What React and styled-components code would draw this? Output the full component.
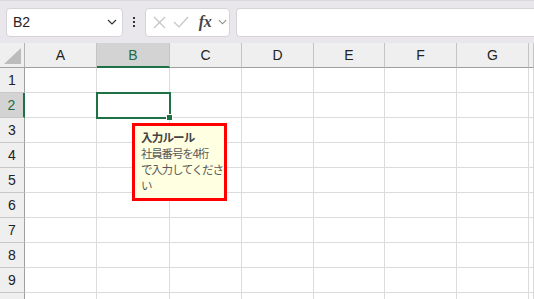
import React from "react";
import styled, { createGlobalStyle } from "styled-components";

const Global = createGlobalStyle`
  html, body { margin: 0; padding: 0; background: #ffffff; }
  body { font-family: "Noto Sans", "Liberation Sans", sans-serif; overflow: hidden; }
`;

const Page = styled.div`
  width: 534px;
  height: 299px;
  position: relative;
  overflow: hidden;
  background: #ffffff;
`;

const TopBar = styled.div`
  height: 43px;
  box-sizing: border-box;
  background: #e9e6ec;
  border-top: 1px solid #dcd8de;
  display: flex;
  align-items: center;
  padding: 0 0 0 6px;
  gap: 0;
`;

const Box = styled.div`
  height: 29px;
  box-sizing: border-box;
  background: #ffffff;
  border: 1px solid #d6d3d8;
  border-radius: ${(p) => (p.$open ? "4px 0 0 4px" : "4px")};
  display: flex;
  align-items: center;
  width: ${(p) => p.$w};
  flex: ${(p) => (p.$grow ? "1" : "none")};
  ${(p) => (p.$open ? "border-right: none;" : "")}
`;

const NameText = styled.span`
  font-family: "Liberation Sans", Arial, sans-serif;
  font-size: 14px;
  color: #222;
  margin-left: 6px;
  flex: 1;
`;

const Dots = styled.div`
  width: 22px;
  display: flex;
  flex-direction: column;
  align-items: center;
  gap: 2px;
  span {
    width: 2px;
    height: 2px;
    background: #333;
  }
`;

const IconSlot = styled.div`
  display: flex;
  align-items: center;
  justify-content: center;
  width: ${(p) => p.$w || "22px"};
  margin-left: ${(p) => p.$ml || "0"};
`;

const Fx = styled.span`
  font-family: "Liberation Serif", "DejaVu Serif", serif;
  font-style: italic;
  font-weight: bold;
  font-size: 16px;
  color: #444;
  letter-spacing: -0.5px;
`;

const Chevron = ({ color = "#333", w = 10 }) => (
  <svg width={w} height="6" viewBox="0 0 10 6">
    <path d="M1 1 L5 5 L9 1" fill="none" stroke={color} strokeWidth="1.2" />
  </svg>
);

const Sheet = styled.div`
  display: grid;
  grid-template-columns: 25px 72px 73px 72px 72px 71px 72px 72px 1fr;
  grid-auto-rows: 25px;
`;

const Corner = styled.div`
  background: #efefef;
  border-right: 1px solid #b4b4b4;
  border-bottom: 1px solid #9f9f9f;
  box-sizing: border-box;
  position: relative;
  svg { position: absolute; right: 3px; bottom: 3px; }
`;

const ColHead = styled.div`
  box-sizing: border-box;
  background: ${(p) => (p.$sel ? "#d3d3d3" : "#efefef")};
  border-right: 1px solid #c4c4c4;
  border-bottom: ${(p) => (p.$sel ? "2px solid #1e7145" : "1px solid #9f9f9f")};
  display: flex;
  align-items: center;
  justify-content: center;
  font-family: "Liberation Sans", Arial, sans-serif;
  font-size: 14px;
  color: ${(p) => (p.$sel ? "#1e6b3f" : "#222")};
  padding-top: ${(p) => (p.$sel ? "1px" : "0")};
`;

const RowHead = styled.div`
  box-sizing: border-box;
  background: ${(p) => (p.$sel ? "#d3d3d3" : "#efefef")};
  border-right: ${(p) => (p.$sel ? "2px solid #1e7145" : "1px solid #9f9f9f")};
  border-bottom: 1px solid #c8c8c8;
  display: flex;
  align-items: center;
  justify-content: center;
  font-family: "Liberation Sans", Arial, sans-serif;
  font-size: 14px;
  color: ${(p) => (p.$sel ? "#1e6b3f" : "#222")};
`;

const Cell = styled.div`
  box-sizing: border-box;
  border-right: 1px solid #dcdcdc;
  border-bottom: 1px solid #dcdcdc;
  background: #fff;
`;

const Selection = styled.div`
  position: absolute;
  left: 96px;
  top: 92px;
  width: 75px;
  height: 27px;
  box-sizing: border-box;
  border: 2px solid #1e7145;
`;

const Handle = styled.div`
  position: absolute;
  left: 166px;
  top: 114px;
  width: 7px;
  height: 7px;
  box-sizing: border-box;
  background: #1e7145;
  border: 1px solid #ffffff;
`;

const Tip = styled.div`
  position: absolute;
  left: 132px;
  top: 123px;
  width: 95px;
  height: 78px;
  box-sizing: border-box;
  border: 3px solid #ff0000;
  background: #ffffe1;
  padding: 3px 0 0 6px;
  font-family: "Noto Sans CJK JP", "Noto Sans", sans-serif;
  font-size: 11.5px;
  letter-spacing: -1.2px;
  line-height: 16px;
  color: #5a5a5a;
  white-space: nowrap;
`;

const TipTitle = styled.div`
  font-weight: bold;
  color: #444;
  letter-spacing: -0.8px;
`;

const cols = ["A", "B", "C", "D", "E", "F", "G", ""];
const rows = [1, 2, 3, 4, 5, 6, 7, 8, 9, ""];

export default function App() {
  return (
    <Page>
      <Global />
      <TopBar>
        <Box $w="117px">
          <NameText>B2</NameText>
          <IconSlot $w="20px"><Chevron /></IconSlot>
        </Box>
        <Dots><span /><span /><span /></Dots>
        <Box $w="85px">
          <IconSlot $w="22px" $ml="2px">
            <svg width="13" height="13" viewBox="0 0 13 13">
              <path d="M1 1 L12 12 M12 1 L1 12" stroke="#c4c4c4" strokeWidth="1.2" fill="none" />
            </svg>
          </IconSlot>
          <IconSlot $w="22px">
            <svg width="16" height="12" viewBox="0 0 16 12">
              <path d="M1 6 L6 11 L15 1" stroke="#c4c4c4" strokeWidth="1.2" fill="none" />
            </svg>
          </IconSlot>
          <IconSlot $w="22px" $ml="2px"><Fx>fx</Fx></IconSlot>
          <IconSlot $w="12px"><Chevron color="#888" w={9} /></IconSlot>
        </Box>
        <IconSlot $w="6px" />
        <Box $grow $open />
      </TopBar>
      <Sheet>
        <Corner>
          <svg width="17" height="16" viewBox="0 0 17 16">
            <polygon points="17,0 17,16 0,16" fill="#bcbcbc" />
          </svg>
        </Corner>
        {cols.map((c, i) => (
          <ColHead key={"h" + i} $sel={c === "B"}>{c}</ColHead>
        ))}
        {rows.map((r, ri) => (
          <React.Fragment key={ri}>
            <RowHead $sel={r === 2}>{r}</RowHead>
            {cols.map((c, i) => (
              <Cell key={i} />
            ))}
          </React.Fragment>
        ))}
      </Sheet>
      <Selection />
      <Handle />
      <Tip>
        <TipTitle>入力ルール</TipTitle>
        <div>社員番号を4桁</div>
        <div>で入力してくださ</div>
        <div>い</div>
      </Tip>
    </Page>
  );
}
